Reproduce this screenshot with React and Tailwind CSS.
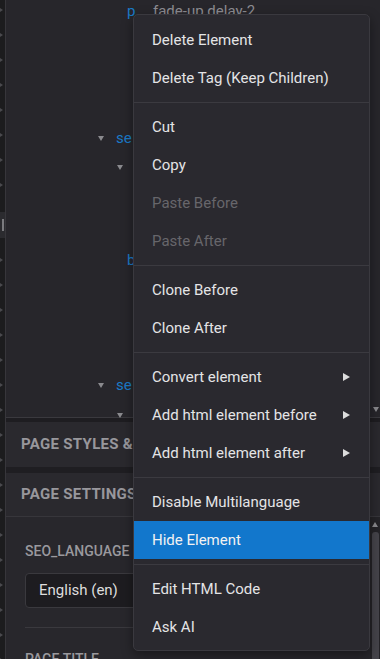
import React from "react";

const Tri = ({ className = "" }) => (
  <svg width="6" height="5" viewBox="0 0 6 5" className={className}>
    <polygon points="0,0 6,0 3,5" fill="#8a8a8e" />
  </svg>
);

const Arrow = () => (
  <svg width="7" height="8" viewBox="0 0 7 8">
    <polygon points="0,0 7,4 0,8" fill="#dcdcdc" />
  </svg>
);

function Item({ label, disabled, active, sub }) {
  return (
    <div
      className={
        "h-[38px] flex items-center justify-between pl-[18px] pr-[19px] text-[15px] " +
        (active ? "bg-[#1277cc] text-[#f2f2f2] " : "") +
        (disabled ? "text-[#67666b]" : active ? "" : "text-[#e4e4e6]")
      }
    >
      <span>{label}</span>
      {sub && <Arrow />}
    </div>
  );
}

const Sep = () => <div className="my-[5px] h-px bg-[#3b3a40]" />;

export default function App() {
  const stripArrows = Array.from({ length: 26 });
  return (
    <div className="relative w-[380px] h-[659px] overflow-hidden flex bg-[#1c1c1e] font-['Roboto',sans-serif]">
      {/* left strip */}
      <div className="w-[5px] shrink-0 flex flex-col pt-[8px]">
        {stripArrows.map((_, i) =>
          i === 8 ? (
            <div key={i} className="h-[50px] shrink-0 pt-[4px]">
              <div className="h-[26px] bg-[#2b2b2f] flex justify-center pt-[7px]">
                <div className="w-[2px] h-[12px] bg-[#7a7a7e]" />
              </div>
            </div>
          ) : (
            <div key={i} className="h-[25px] shrink-0 flex items-start">
              <svg width="3" height="4" viewBox="0 0 3 4">
                <polygon points="0,0 3,2 0,4" fill="#4a4a4e" />
              </svg>
            </div>
          )
        )}
      </div>
      <div className="w-px shrink-0 bg-[#37363b]" />

      {/* main column */}
      <div className="flex-1 flex flex-col min-w-0">
        {/* tree panel */}
        <div className="h-[418px] shrink-0 flex bg-[#27262b] border-b border-[#3a393e]">
          <div className="flex-1 flex flex-col text-[15px] leading-[20px] pt-[1px]">
            <div className="h-[20px] shrink-0 flex items-center ml-[121px]">
              <span className="w-[26px] text-[#1b7bc8]">p</span>
              <span className="text-[#8d8c92] whitespace-nowrap">fade-up delay-2</span>
            </div>
            <div className="h-[20px] shrink-0 mt-[107px] flex items-center ml-[92px]">
              <Tri />
              <span className="ml-[12px] text-[#1b7bc8]">se</span>
            </div>
            <div className="h-[20px] shrink-0 mt-[9px] flex items-center ml-[111px]">
              <Tri />
            </div>
            <div className="h-[20px] shrink-0 mt-[73px] flex items-center ml-[121px]">
              <span className="text-[#1b7bc8]">b</span>
            </div>
            <div className="h-[20px] shrink-0 mt-[105px] flex items-center ml-[92px]">
              <Tri />
              <span className="ml-[12px] text-[#1b7bc8]">se</span>
            </div>
            <div className="h-[20px] shrink-0 mt-[10px] flex items-center ml-[111px]">
              <Tri />
            </div>
          </div>
          <div className="w-[8px] flex flex-col justify-end pb-[5px] items-center">
            <Tri />
          </div>
        </div>
        <div className="h-[4px] shrink-0 bg-[#1e1d21]" />

        {/* PAGE STYLES header */}
        <div className="h-[45px] shrink-0 flex items-center pl-[15px] bg-[#2a292e] text-[15px] font-bold tracking-[0.3px] text-[#98979c] whitespace-nowrap">
          PAGE STYLES &amp;
        </div>
        <div className="h-[6px] shrink-0 bg-[#1f1e22]" />
        <div className="h-[44px] shrink-0 flex items-center pl-[15px] bg-[#2a292e] border-b border-[#37363b] text-[15px] font-bold tracking-[0.3px] text-[#98979c] whitespace-nowrap">
          PAGE SETTINGS
        </div>

        {/* settings content */}
        <div className="flex-1 flex bg-[#28272c] min-h-0 overflow-hidden">
          <div className="flex-1 pl-[19px] pr-[20px] pt-[24px] flex flex-col">
            <div className="h-[20px] shrink-0 leading-[20px] text-[14px] font-medium text-[#9a999e]">SEO_LANGUAGE</div>
            <div className="mt-[12px] h-[35px] shrink-0 rounded-[4px] border border-[#3a393e] bg-[#1d1c20] flex items-center px-[13px] text-[15px] text-[#dedede]">
              English (en)
            </div>
            <div className="mt-[19px] h-px shrink-0 bg-[#3a393e]" />
            <div className="mt-[21px] h-[20px] shrink-0 leading-[20px] text-[14px] font-medium text-[#9a999e]">PAGE TITLE</div>
          </div>
          <div className="w-[10px] flex flex-col items-center pt-[5px] bg-[#242327]">
            <svg width="6" height="5" viewBox="0 0 6 5" className="shrink-0">
              <polygon points="0,5 6,5 3,0" fill="#8a8a8e" />
            </svg>
            <div className="mt-[5px] w-[7px] flex-1 rounded-t-[3px] bg-[#45444a]" />
          </div>
        </div>
      </div>

      {/* context menu */}
      <div className="absolute left-[133px] top-[14px] w-[237px] h-[637px] rounded-[5px] border border-[#3a393f] bg-[#2a292f] pt-[6px] pb-[5px] shadow-[0_4px_12px_rgba(0,0,0,0.4)]">
        <Item label="Delete Element" />
        <Item label="Delete Tag (Keep Children)" />
        <Sep />
        <Item label="Cut" />
        <Item label="Copy" />
        <Item label="Paste Before" disabled />
        <Item label="Paste After" disabled />
        <Sep />
        <Item label="Clone Before" />
        <Item label="Clone After" />
        <Sep />
        <Item label="Convert element" sub />
        <Item label="Add html element before" sub />
        <Item label="Add html element after" sub />
        <Sep />
        <Item label="Disable Multilanguage" />
        <Item label="Hide Element" active />
        <Sep />
        <Item label="Edit HTML Code" />
        <Item label="Ask AI" />
      </div>
    </div>
  );
}
